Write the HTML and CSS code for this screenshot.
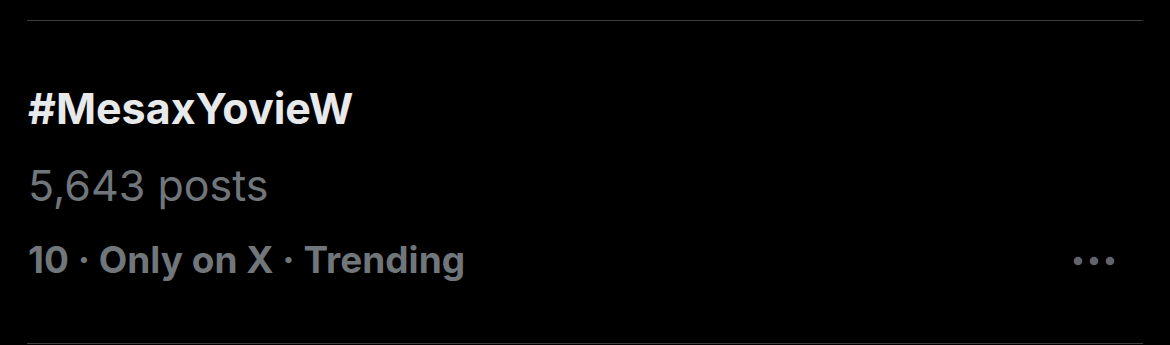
FILE: index.html
```html
<!DOCTYPE html>
<html lang="en">
<head>
  <meta charset="UTF-8">
  <title>Trend</title>
  <link rel="stylesheet" href="styles.css">
</head>
<body>

  <div class="trend">
    <div class="trend-name">#MesaxYovieW</div>
    <div class="trend-count">5,643 posts</div>
    <div class="trend-meta">
      <span>10 · Only on X · Trending</span>
      <svg class="more" width="42" height="10" viewBox="0 0 42 10">
        <circle cx="5" cy="5" r="4.3"></circle>
        <circle cx="21" cy="5" r="4.3"></circle>
        <circle cx="37" cy="5" r="4.3"></circle>
      </svg>
    </div>
  </div>

</body>
</html>
```

FILE: styles.css
```css
* {
  box-sizing: border-box;
}

body {
  margin: 0;
  padding: 0;
  background-color: #000;
  font-family: Inter, "Liberation Sans", sans-serif;
}

.trend {
  margin: 20px 27px 0;
  padding: 62px 0 61px 1px;
  border-top: 1px solid #3a3d40;
  border-bottom: 1px solid #3a3d40;
}

.trend-name {
  color: #e7e9ea;
  font-size: 43px;
  font-weight: 700;
  line-height: 50px;
}

.trend-count {
  margin-top: 27px;
  color: #71767b;
  font-size: 43px;
  line-height: 50px;
}

.trend-meta {
  margin-top: 28px;
  display: flex;
  justify-content: space-between;
  align-items: center;
  padding-right: 28px;
  color: #71767b;
  font-size: 37px;
  font-weight: 700;
  line-height: 44px;
}

.more {
  margin-top: 2px;
}

.more circle {
  fill: #606468;
}
```
